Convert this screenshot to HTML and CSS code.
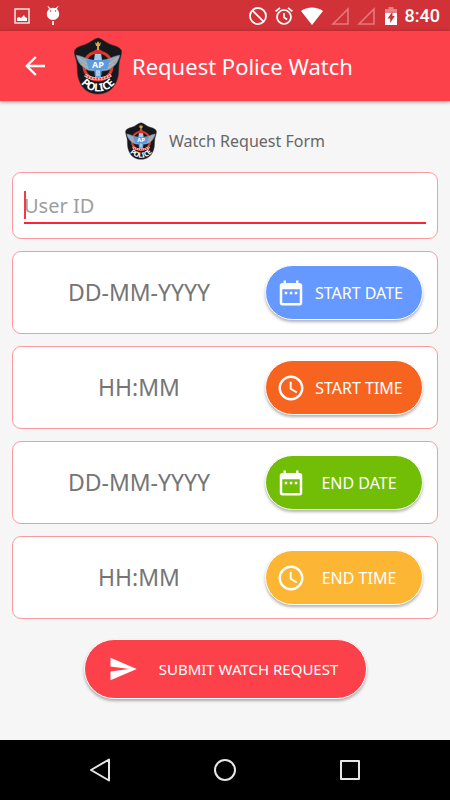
FILE: index.html
```html
<!DOCTYPE html>
<html lang="en">
<head>
<meta charset="UTF-8">
<meta name="viewport" content="width=device-width, initial-scale=1.0">
<title>Request Police Watch</title>
<link rel="stylesheet" href="styles.css">
</head>
<body>
<!-- shared icons -->
<svg class="sprite" aria-hidden="true">
    <symbol id="calendar" viewBox="0 0 24 24">
        <path d="M9 11H7v2h2v-2zm4 0h-2v2h2v-2zm4 0h-2v2h2v-2zm2-7h-1V2h-2v2H8V2H6v2H5c-1.100 0-2 .9-2 2v14c0 1.100.9 2 2 2h14c1.100 0 2-.9 2-2V6c0-1.100-.9-2-2-2zm0 16H5V9h14v11z"/>
    </symbol>
    <symbol id="clock" viewBox="0 0 24 24">
        <path d="M12 2C6.500 2 2 6.500 2 12s4.500 10 10 10 10-4.500 10-10S17.500 2 12 2zm0 18c-4.400 0-8-3.600-8-8s3.600-8 8-8 8 3.600 8 8-3.600 8-8 8zm.5-13H11v6l5.250 3.150.75-1.230-4.500-2.670z"/>
    </symbol>
</svg>

<div class="status-bar">
    <div class="status-left">
        <svg width="16" height="16" viewBox="0 0 16 16"><path fill="none" stroke="#fff" stroke-opacity=".85" stroke-width="1.500" d="M1 1h14v14H1z"/><path fill="#fff" d="M3 13v-3l2-1 2 1 3-3 1 2 2 1v3z"/></svg>
        <svg width="14" height="20" viewBox="0 0 14 20"><path fill="#fff" d="M2 0l2.500 2.200a6 6 0 0 1 5 0L12 0l.5.500-1.700 2.500C15 6.500 13.500 14 7 14S-1 6.500 3.200 3L1.500.5zM6.200 15h1.700v4H6.200z"/><circle cx="4.500" cy="5" r=".8" fill="#d13238"/><circle cx="9.500" cy="5" r=".8" fill="#d13238"/></svg>
    </div>
    <div class="status-right">
        <svg width="18" height="18" viewBox="0 0 18 18"><g fill="none" stroke="#fff" stroke-width="1.800"><circle cx="9" cy="9" r="8"/><path d="M3.400 3.400l11.200 11.200"/></g></svg>
        <svg width="18" height="18" viewBox="0 0 18 18"><g fill="none" stroke="#fff" stroke-width="1.700"><circle cx="9" cy="10" r="7"/><path d="M.6 4.400L5 .8M17.400 4.400L13 .8M9 6v4.500l3.200 2"/></g></svg>
        <svg width="22" height="18" viewBox="0 0 22 18"><path fill="#fff" d="M11 18L0 4C6-.8 16-.8 22 4z"/></svg>
        <svg class="signal" width="18" height="18" viewBox="0 0 18 18"><path fill="none" stroke="#fff" stroke-width="1.600" d="M2 17L17 2v15z"/></svg>
        <svg class="signal" width="18" height="18" viewBox="0 0 18 18"><path fill="none" stroke="#fff" stroke-width="1.600" d="M2 17L17 2v15z"/></svg>
        <svg class="battery" width="12" height="18" viewBox="0 0 12 18"><path fill="#fff" fill-opacity=".4" d="M0 2h3.500V0h5v2H12v4H0z"/><path fill="#fff" d="M0 6h12v12H0z"/><path fill="#d13238" d="M7.500 4.500L2.500 11.500h2.700v4.500l4.600-7H7.500z"/></svg>
        <span class="time">8:40</span>
    </div>
</div>

<header class="app-bar">
    <button type="button" class="back" aria-label="Back">
        <svg width="20" height="20" viewBox="0 0 20 20"><path fill="none" stroke="#fff" stroke-width="2.400" d="M20 10H2M10.800 1L1.800 10l9 9"/></svg>
    </button>
    <svg class="logo" width="48" height="58" viewBox="0 0 48 58">
        <g id="badge">
            <path fill="#16181c" stroke="#3a3034" stroke-width=".6" d="M24 1C29 2 32 6 38 8c4 1 9 3 9.500 6 .5 4-2 8-2.500 13-.5 6 0 11-2 16-3 9-10 14-19 14S8 52 5 43C3 38 3.500 33 3 27 2.500 22 0 18 .5 14 1 11 6 9 10 8c6-2 9-6 14-7z"/>
            <circle cx="24" cy="29" r="14" fill="none" stroke="#e5392f" stroke-width="3"/>
            <path fill="#93a9bd" stroke="#5d6d7a" stroke-width=".5" d="M2 18c7 1 12 5 18 5h8c6 0 11-4 18-5-1 5-4 10-7 12-3 3-7 4-10 4H19c-3 0-7-1-10-4-3-2-6-7-7-12z"/>
            <path fill="none" stroke="#d4b38a" stroke-width="1" d="M4 20c4 4 6 6 9 7M44 20c-4 4-6 6-9 7M8 27l6 4M40 27l-6 4"/>
            <path fill="#5a9be0" d="M12 23h24l-3 9h-5l-1 8h-6l-1-8h-5z"/>
            <path fill="#a8c8e6" d="M21 16h6l1 7h-8zM22 33h4v6h-4z"/>
            <path fill="#dd2f2c" d="M19 16c1-5 9-5 10 0l-2 1h-6z"/>
            <path fill="#d8a548" d="M21 5l1.500 1.500L24 4l1.500 2.500L27 5l-1 4h-4zM23 9h2v4h-2z"/>
            <path fill="none" stroke="#e9d3c9" stroke-width="3" d="M11 38c6 5 20 5 26 0"/>
            <path fill="none" stroke="#e5392f" stroke-width="1.800" stroke-dasharray="2 1" d="M11 38c6 5 20 5 26 0"/>
            <text class="badge-initials" x="24" y="31" text-anchor="middle">AP</text>
            <path id="badge-arc" fill="none" d="M4 41C11 59 37 59 44 41"/>
            <text class="badge-name" text-anchor="middle"><textPath href="#badge-arc" startOffset="50%">POLICE</textPath></text>
        </g>
    </svg>
    <h1>Request Police Watch</h1>
</header>

<main>
    <div class="form-title">
        <svg width="32" height="38" viewBox="0 0 48 58"><use href="#badge"/></svg>
        <h2>Watch Request Form</h2>
    </div>

    <form id="watchForm">
        <div class="card user-card">
            <input type="text" id="userId" class="user-id" placeholder="User ID" aria-label="User ID">
            <span class="caret"></span>
        </div>
        <div class="card">
            <input type="text" class="value" placeholder="DD-MM-YYYY" aria-label="Start date" readonly>
            <button type="button" class="pill start-date"><svg><use href="#calendar"/></svg><span>START DATE</span></button>
        </div>
        <div class="card">
            <input type="text" class="value" placeholder="HH:MM" aria-label="Start time" readonly>
            <button type="button" class="pill start-time"><svg><use href="#clock"/></svg><span>START TIME</span></button>
        </div>
        <div class="card">
            <input type="text" class="value" placeholder="DD-MM-YYYY" aria-label="End date" readonly>
            <button type="button" class="pill end-date"><svg><use href="#calendar"/></svg><span>END DATE</span></button>
        </div>
        <div class="card">
            <input type="text" class="value" placeholder="HH:MM" aria-label="End time" readonly>
            <button type="button" class="pill end-time"><svg><use href="#clock"/></svg><span>END TIME</span></button>
        </div>
        <button type="submit" class="pill submit">
            <svg viewBox="0 0 24 24"><path d="M2 21l21-9L2 3v7l15 2-15 2z"/></svg>
            <span>SUBMIT WATCH REQUEST</span>
        </button>
    </form>
</main>

<nav class="nav-bar">
    <button type="button" aria-label="Back"><svg width="24" height="24" viewBox="0 0 24 24"><path d="M21 1.500v21L3 12z"/></svg></button>
    <button type="button" aria-label="Home"><svg width="24" height="24" viewBox="0 0 24 24"><circle cx="12" cy="12" r="10"/></svg></button>
    <button type="button" aria-label="Recent apps"><svg width="24" height="24" viewBox="0 0 24 24"><path d="M3 3h18v18H3z"/></svg></button>
</nav>
</body>
</html>
```
FILE: styles.css
```css
* {
    box-sizing: border-box;
}

body {
    margin: 0;
    min-height: 100vh;
    display: flex;
    flex-direction: column;
    background-color: #f6f6f6;
    font-family: "Noto Sans", "Open Sans", sans-serif;
}

button,
input {
    font-family: inherit;
    border: none;
    padding: 0;
    outline: none;
}

svg {
    display: block;
    flex-shrink: 0;
}

.sprite {
    position: absolute;
    width: 0;
    height: 0;
}

.badge-initials {
    font-size: 9px;
    font-weight: bold;
    fill: #fff;
}

.badge-name {
    font-size: 11px;
    font-weight: bold;
    fill: #fff;
}

/* status bar */
.status-bar {
    display: flex;
    justify-content: space-between;
    align-items: center;
    height: 31px;
    padding: 0 10px 0 14px;
    background-color: #d13238;
}

.status-left,
.status-right {
    display: flex;
    align-items: center;
}

.status-left {
    gap: 16px;
}

.status-right {
    gap: 8px;
}

.signal {
    opacity: 0.35;
}

.battery {
    margin-left: 2px;
}

.time {
    font-family: Roboto, sans-serif;
    font-size: 18px;
    font-weight: 500;
    line-height: 20px;
    color: #fff;
}

/* app bar */
.app-bar {
    display: flex;
    align-items: center;
    height: 70px;
    padding: 0 25px;
    background-color: #fd414a;
    box-shadow: 0 1px 4px rgba(0, 0, 0, 0.4);
}

.back {
    background: none;
    cursor: pointer;
}

.logo {
    margin-left: 29px;
}

h1 {
    margin: 0 0 0 10px;
    font-size: 22px;
    font-weight: normal;
    line-height: 30px;
    color: #fff;
}

/* form */
main {
    flex: 1;
    padding: 20px 12px;
}

.form-title {
    display: flex;
    justify-content: center;
    align-items: center;
    gap: 12px;
    height: 40px;
    margin-bottom: 11px;
}

h2 {
    margin: 0;
    font-size: 16px;
    font-weight: normal;
    line-height: 24px;
    color: #666;
}

form {
    display: flex;
    flex-direction: column;
    gap: 12px;
}

.card {
    display: flex;
    align-items: center;
    height: 83px;
    padding-right: 14px;
    background-color: #fff;
    border: 1px solid #fa9a9e;
    border-radius: 9px;
}

.user-card {
    position: relative;
    height: 67px;
    padding: 0 11px;
}

.user-id {
    flex: 1;
    min-width: 0;
    height: 36px;
    padding-top: 2px;
    border-bottom: 2px solid #fb2338;
    background: none;
    font-size: 20px;
}

.user-id::placeholder {
    color: #9e9e9e;
}

.caret {
    position: absolute;
    left: 11px;
    top: 18px;
    width: 2px;
    height: 28px;
    background-color: #fb3448;
}

.value {
    flex: 1;
    min-width: 0;
    padding-bottom: 2px;
    background: none;
    font-size: 23px;
    text-align: center;
}

.value::placeholder {
    color: #757575;
}

.pill {
    display: flex;
    align-items: center;
    width: 158px;
    height: 55px;
    padding: 0 10px;
    border: 1px solid #fff;
    border-radius: 28px;
    box-shadow: 0 2px 3px rgba(0, 0, 0, 0.3);
    color: #fff;
    font-size: 16px;
    cursor: pointer;
}

.pill svg {
    width: 30px;
    height: 30px;
    fill: #fff;
}

.pill span {
    flex: 1;
    white-space: nowrap;
}

.start-date {
    background-color: #6699ff;
}

.start-time {
    background-color: #f66420;
}

.end-date {
    background-color: #72be06;
}

.end-time {
    background-color: #fdb633;
}

.submit {
    align-self: center;
    width: 283px;
    height: 60px;
    margin-top: 8px;
    padding: 0 6px 0 23px;
    border-radius: 30px;
    background-color: #fd414a;
    font-size: 15px;
}

/* navigation bar */
.nav-bar {
    display: flex;
    align-items: center;
    height: 60px;
    padding: 0 37px;
    background-color: #000;
}

.nav-bar button {
    flex: 1;
    display: flex;
    justify-content: center;
    background: none;
    cursor: pointer;
}

.nav-bar svg {
    fill: none;
    stroke: #e6e6e6;
    stroke-width: 2;
    stroke-linejoin: round;
}
```
